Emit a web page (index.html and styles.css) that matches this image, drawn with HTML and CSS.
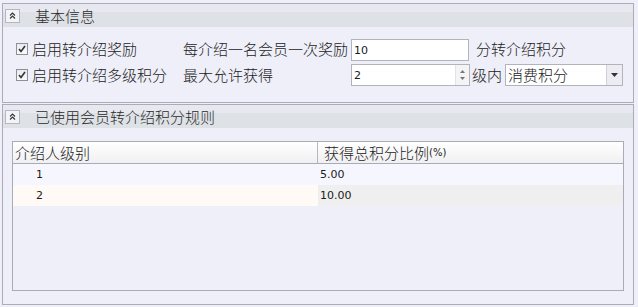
FILE: index.html
```html
<!DOCTYPE html>
<html>
<head>
<meta charset="utf-8">
<link rel="stylesheet" href="styles.css">
</head>
<body>
<div class="page">
  <section class="group group-basic">
    <div class="ghead">
      <span class="collapse"><svg width="7" height="7" viewBox="0 0 7 7"><polyline points="1,3.5 3.5,1 6,3.5" fill="none" stroke="#333" stroke-width="1.1"/><polyline points="1,6.5 3.5,4 6,6.5" fill="none" stroke="#333" stroke-width="1.1"/></svg></span>
      <span class="gtitle">基本信息</span>
    </div>
    <div class="gbody form">
      <label class="check"><span class="cbox"><svg width="8" height="8" viewBox="0 0 8 8"><polyline points="1,4 3,6.5 7,1" fill="none" stroke="#333" stroke-width="1.6"/></svg></span>启用转介绍奖励</label>
      <span class="lbl">每介绍一名会员一次奖励</span>
      <div class="input"><span class="num">10</span></div>
      <span class="suffix">分转介绍积分</span>

      <label class="check"><span class="cbox"><svg width="8" height="8" viewBox="0 0 8 8"><polyline points="1,4 3,6.5 7,1" fill="none" stroke="#333" stroke-width="1.6"/></svg></span>启用转介绍多级积分</label>
      <span class="lbl">最大允许获得</span>
      <div class="input spin"><span class="num">2</span>
        <span class="spinbtns"><svg width="5" height="3" viewBox="0 0 5 3"><polygon points="0,3 2.5,0 5,3" fill="#777"/></svg><svg width="5" height="3" viewBox="0 0 5 3"><polygon points="0,0 2.5,3 5,0" fill="#777"/></svg></span>
      </div>
      <div class="level">
        <span class="lvl">级内</span>
        <div class="combo"><span class="ctext">消费积分</span><span class="dropbtn"><svg width="7" height="4" viewBox="0 0 7 4"><polygon points="0,0 7,0 3.5,4" fill="#333"/></svg></span></div>
      </div>
    </div>
  </section>

  <section class="group group-rules">
    <div class="ghead">
      <span class="collapse"><svg width="7" height="7" viewBox="0 0 7 7"><polyline points="1,3.5 3.5,1 6,3.5" fill="none" stroke="#333" stroke-width="1.1"/><polyline points="1,6.5 3.5,4 6,6.5" fill="none" stroke="#333" stroke-width="1.1"/></svg></span>
      <span class="gtitle">已使用会员转介绍积分规则</span>
    </div>
    <div class="gbody gridwrap">
      <div class="grid">
        <div class="row head">
          <div class="cell c1">介绍人级别</div>
          <div class="cell c2">获得总积分比例<span class="num pct">(%)</span></div>
        </div>
        <div class="row r1">
          <div class="cell c1"><span class="num lvlnum">1</span></div>
          <div class="cell c2"><span class="num">5.00</span></div>
        </div>
        <div class="row r2">
          <div class="cell c1"><span class="num lvlnum">2</span></div>
          <div class="cell c2"><span class="num">10.00</span></div>
        </div>
      </div>
    </div>
  </section>
</div>
</body>
</html>
```

FILE: styles.css
```css
* { box-sizing: border-box; }
html, body {
  margin: 0;
  background: #eeeff8;
}
body {
  font-family: "Noto Sans CJK SC", "Noto Sans", sans-serif;
  font-weight: 300;
  font-size: 15px;
  color: #222;
  width: 638px;
  height: 307px;
  overflow: hidden;
}
.page {
  padding: 3px 4px 0 2px;
  display: flex;
  flex-direction: column;
  gap: 1px;
}
.group {
  border: 1px solid #aaacb8;
  background: #eeeff8;
  display: flex;
  flex-direction: column;
}
.group-basic { height: 100px; }
.group-rules { height: 201px; }
.ghead {
  height: 23px;
  display: flex;
  align-items: center;
  background: linear-gradient(#e7e8f0 0, #e7e8f0 36%, #dee2e6 36%, #dee2e6 100%);
  padding-left: 2px;
}
.collapse {
  width: 15px;
  height: 14px;
  border: 1px solid #b4b8c4;
  background: #f3f4f8;
  display: flex;
  align-items: center;
  justify-content: center;
}
.gtitle {
  margin-left: 15px;
  line-height: 20px;
  color: #2a2a2a;
}
.gbody { flex: 1; }

/* form */
.form {
  display: grid;
  grid-template-columns: 167px 168px 119px auto;
  grid-template-rows: 22px 22px;
  row-gap: 3px;
  padding: 12px 0 0 13px;
  align-items: center;
}
.check {
  display: flex;
  align-items: center;
  line-height: 20px;
  margin-top: -3px;
}
.form .check:nth-of-type(2) { margin-top: 0; }
.cbox {
  width: 12px;
  height: 12px;
  border: 1px solid #8e8f98;
  background: linear-gradient(#e9eaee, #fafafc);
  display: flex;
  align-items: center;
  justify-content: center;
  margin-right: 4px;
}
.lbl { line-height: 20px; }
.form .lbl:nth-of-type(1) { margin-top: -3px; }
.input {
  height: 22px;
  border: 1px solid #b2b4bc;
  background: #fff;
  display: flex;
  align-items: center;
  padding-left: 2px;
  width: 118px;
}
.num {
  font-family: "DejaVu Sans", sans-serif;
  font-weight: 400;
  font-size: 11px;
  color: #1a1a1a;
}
.pct { font-size: 10px; }
.input .num { flex: 1; padding-top: 1px; }
.spin { width: 119px; }
.spinbtns {
  width: 14px;
  height: 100%;
  background: #f4f4f6;
  border-left: 1px solid #e2e2e8;
  display: flex;
  flex-direction: column;
  align-items: center;
  justify-content: center;
  gap: 4px;
}
.suffix {
  margin-left: 6px;
  line-height: 20px;
  margin-top: -3px;
}
.level {
  display: flex;
  align-items: center;
  margin-left: 2px;
}
.lvl { line-height: 20px; }
.combo {
  margin-left: 3px;
  width: 118px;
  height: 22px;
  border: 1px solid #b2b4bc;
  background: #fff;
  display: flex;
  align-items: center;
}
.ctext { flex: 1; padding-left: 2px; line-height: 20px; }
.dropbtn {
  width: 16px;
  height: 100%;
  background: #ececf2;
  border-left: 1px solid #d0d0d8;
  display: flex;
  align-items: center;
  justify-content: center;
}

/* grid */
.gridwrap {
  padding: 13px 9px 13px 9px;
  display: flex;
}
.grid {
  flex: 1;
  border: 1px solid #a9acb8;
  background: #eeeff8;
}
.row {
  display: flex;
  height: 21px;
}
.cell {
  display: flex;
  align-items: center;
}
.c1 { width: 305px; }
.c2 { flex: 1; padding-left: 2px; }
.head {
  height: 22px;
  border-bottom: 1px solid #a9acb8;
  background: linear-gradient(#ffffff, #f0f0f2);
}
.head .c1 { border-right: 1px solid #b4b6c0; padding-left: 2px; line-height: 20px; }
.head .c2 { line-height: 20px; padding-left: 6px; }
.r1 { background: #f5f6fe; }
.r2 .c1 { background: #fffaf5; }
.r2 .c2 { background: #efeff0; }
.lvlnum { padding-left: 23px; }
.r1 .c2, .r2 .c2 { padding-left: 2px; }
```
